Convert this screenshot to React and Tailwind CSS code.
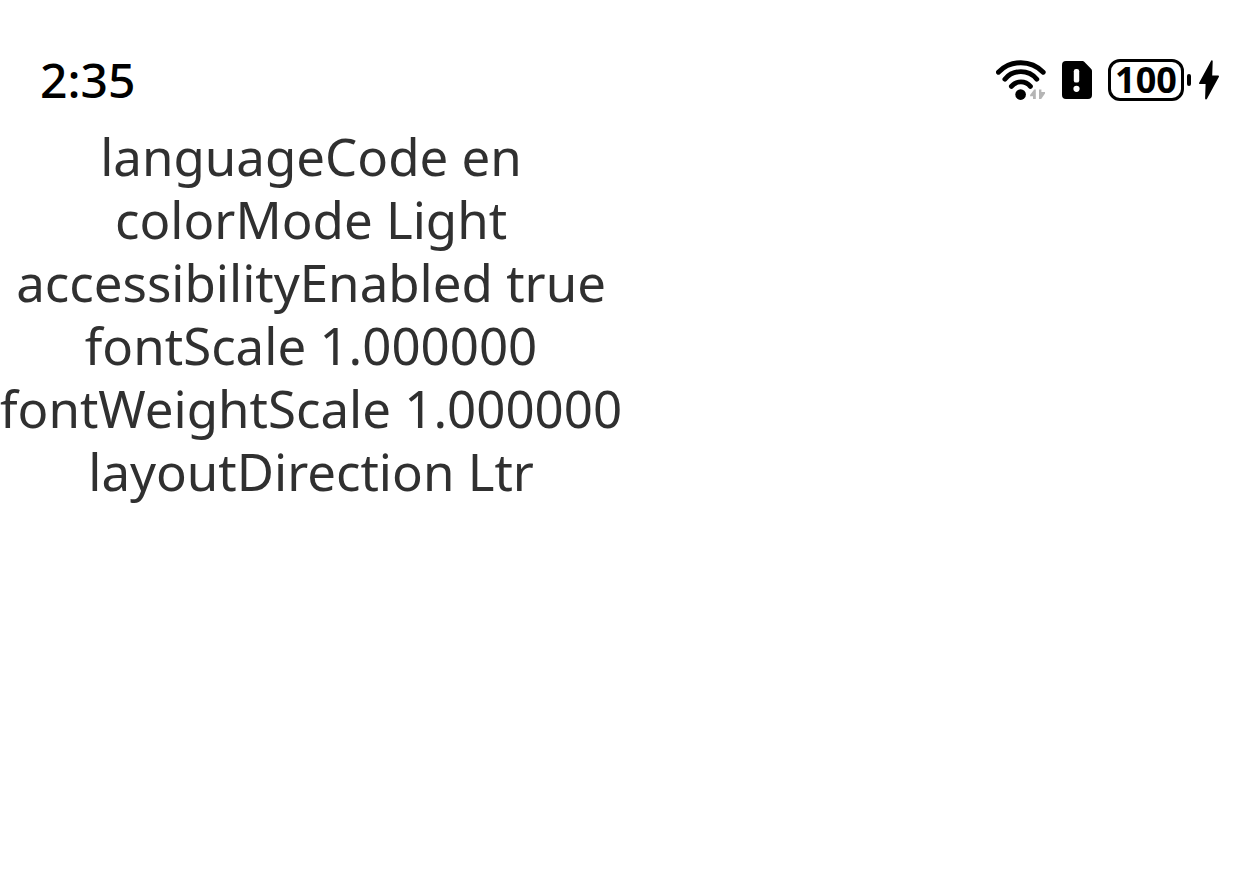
const settings = [
  ["languageCode", "en"],
  ["colorMode", "Light"],
  ["accessibilityEnabled", "true"],
  ["fontScale", "1.000000"],
  ["fontWeightScale", "1.000000"],
  ["layoutDirection", "Ltr"],
];

function WifiIcon() {
  return (
    <svg width="50" height="42" viewBox="0 0 50 42" fill="none" role="img" aria-label="Wi-Fi">
      <g stroke="#000" strokeWidth="4.9" strokeLinecap="round">
        <path d="M2.4 13.2A31.2 31.2 0 0 1 47.2 13.2" />
        <path d="M8.9 20.2A20.6 20.6 0 0 1 40.8 20.2" />
        <path d="M15.4 27.3A12.5 12.5 0 0 1 34.4 27.3" />
      </g>
      <circle cx="24.6" cy="35.6" r="5.3" fill="#000" />
      <path
        d="M38.2 30.6H39.8V40H37V37.2H34L34.2 35.8ZM43 30.6H45.4V33H49V34.6L45.2 40H43Z"
        fill="#b5b5b5"
      />
    </svg>
  );
}

function SimAlertIcon() {
  return (
    <svg width="30" height="38" viewBox="0 0 30 38" role="img" aria-label="SIM card alert">
      <path d="M4 0H20.5Q21.5 0 22.2 .7L29 7.8Q30 8.8 30 10V34Q30 38 26 38H4Q0 38 0 34V4Q0 0 4 0Z" />
      <rect x="11.8" y="8" width="5.4" height="13.6" rx="2.2" fill="#fff" />
      <circle cx="14.5" cy="27.8" r="3.1" fill="#fff" />
    </svg>
  );
}

function Battery() {
  return (
    <div className="flex items-center gap-[3px]">
      <div className="flex h-[42px] w-[76px] items-center justify-center rounded-xl border-[3px] border-black text-[36px] leading-none font-bold">
        100
      </div>
      <div className="h-3 w-1 rounded-full bg-black" />
    </div>
  );
}

function BoltIcon() {
  return (
    <svg width="20" height="40" viewBox="0 0 20 40" role="img" aria-label="Charging">
      <path d="M12.8 .3Q13.8 .3 13.7 1.6L13.2 15.6H19.3Q20.4 15.6 19.8 17L8 38.7Q7.4 39.8 6.8 39.4Q6.1 39.2 6.1 38.3L6.6 24H.9Q-.3 24 .3 22.6L12 .9Q12.3 .3 12.8 .3Z" />
    </svg>
  );
}

export default function App() {
  return (
    <div className="min-h-screen overflow-x-hidden bg-white font-['Noto_Sans',sans-serif]">
      <header className="flex h-[125px] items-center justify-between pt-[35px] pr-[41px] pl-10 text-black">
        <time className="text-5xl leading-none font-medium">2:35</time>
        <div className="flex items-center gap-4">
          <WifiIcon />
          <SimAlertIcon />
          <div className="flex items-center gap-2">
            <Battery />
            <BoltIcon />
          </div>
        </div>
      </header>
      <main className="w-fit text-center text-[51px] leading-[63px] text-[#303030]">
        {settings.map(([name, value]) => (
          <p key={name} className="whitespace-nowrap">
            {name} {value}
          </p>
        ))}
      </main>
    </div>
  );
}
